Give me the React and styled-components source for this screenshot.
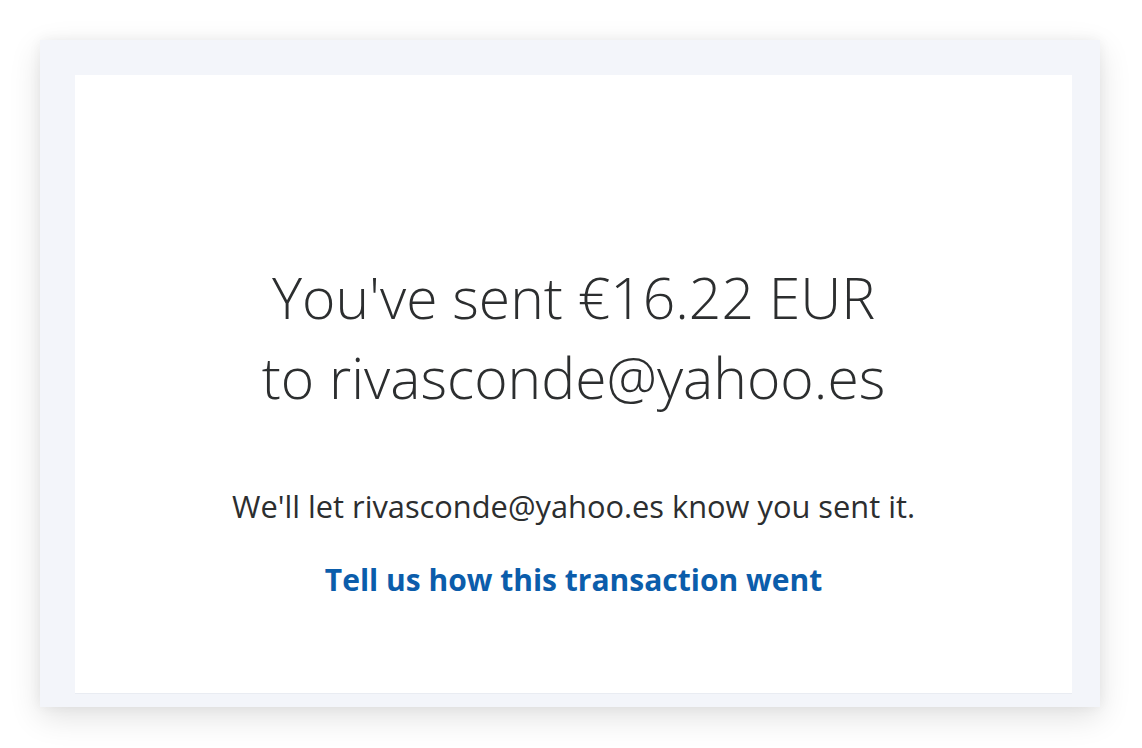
import React from "react";
import styled, { createGlobalStyle } from "styled-components";

const GlobalStyle = createGlobalStyle`
  html, body {
    margin: 0;
    padding: 0;
    background: #ffffff;
  }
  body {
    font-family: "Open Sans", "Liberation Sans", Arial, sans-serif;
    color: #2c2e2f;
  }
`;

const Page = styled.div`
  width: 1142px;
  height: 748px;
  padding: 40px 0 0 40px;
  box-sizing: border-box;
`;

const Frame = styled.div`
  width: 1060px;
  height: 667px;
  box-sizing: border-box;
  padding: 35px 28px 13px 35px;
  background: #f3f5fa;
  box-shadow: 0 10px 30px rgba(0, 0, 0, 0.12), 0 0 12px rgba(0, 0, 0, 0.05);
  display: flex;
`;

const Card = styled.div`
  flex: 1;
  background: #ffffff;
  border-bottom: 1px solid #e9ecf2;
  display: flex;
  flex-direction: column;
  align-items: center;
  padding-top: 182px;
  text-align: center;
`;

const Headline = styled.h1`
  margin: 0;
  font-weight: 300;
  font-size: 57px;
  line-height: 80px;
  color: #2c2e2f;
`;

const Note = styled.p`
  margin: 69px 0 0;
  font-size: 30.8px;
  line-height: 40px;
  color: #2c2e2f;
`;

const FeedbackLink = styled.a`
  margin-top: 34px;
  font-size: 30px;
  line-height: 40px;
  font-weight: 700;
  color: #0b5dab;
  text-decoration: none;
  cursor: pointer;
`;

export default function App() {
  return (
    <>
      <GlobalStyle />
      <Page>
        <Frame>
          <Card>
            <Headline>
              You've sent €16.22 EUR
              <br />
              to rivasconde@yahoo.es
            </Headline>
            <Note>We'll let rivasconde@yahoo.es know you sent it.</Note>
            <FeedbackLink href="#">Tell us how this transaction went</FeedbackLink>
          </Card>
        </Frame>
      </Page>
    </>
  );
}
